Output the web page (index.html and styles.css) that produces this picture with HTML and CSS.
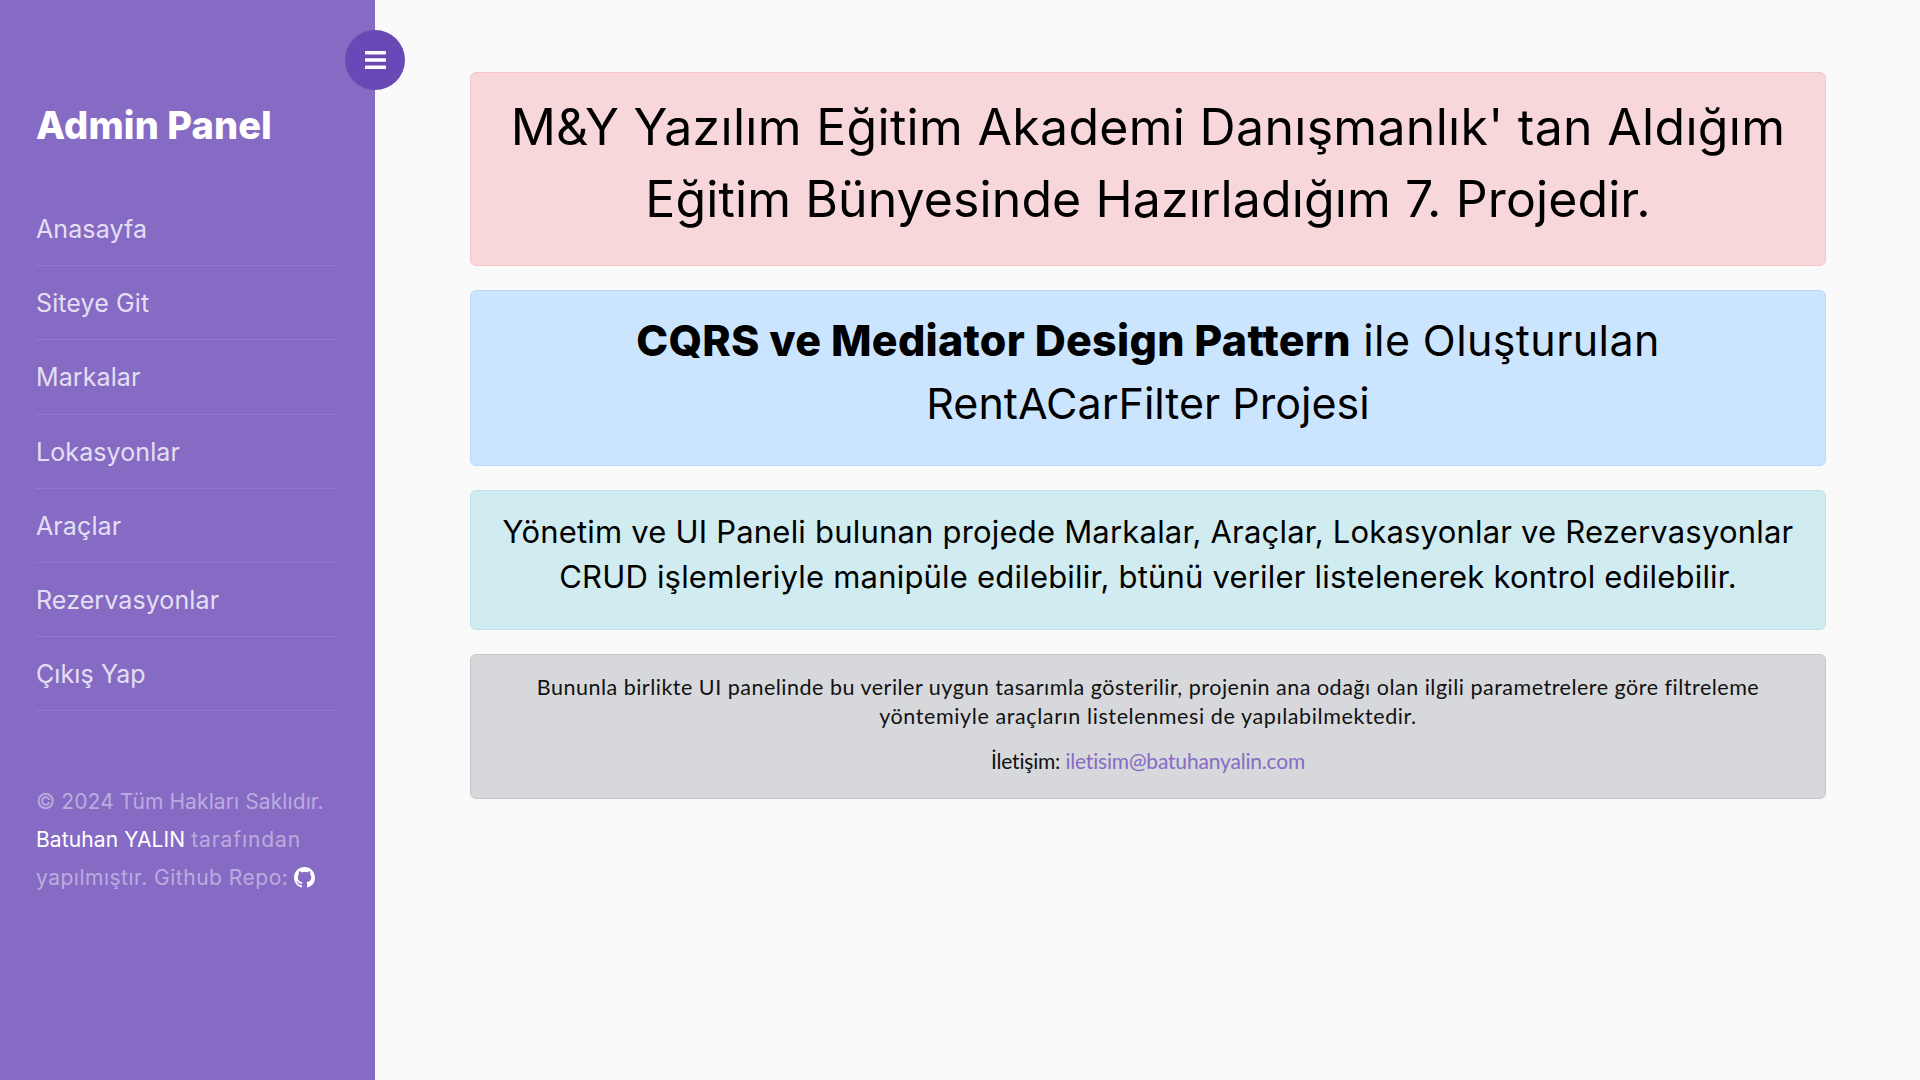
FILE: index.html
```html
<!DOCTYPE html>
<html lang="tr">
<head>
  <meta charset="UTF-8">
  <meta name="viewport" content="width=device-width, initial-scale=1.0">
  <title>Admin Panel</title>
  <link rel="stylesheet" href="styles.css">
</head>
<body>
  <div class="wrapper">
    <!-- Sidebar -->
    <nav class="sidebar">
      <button class="toggle-btn" type="button" aria-label="Menu">
        <svg viewBox="0 0 21 18" width="21" height="18" fill="#fff">
          <rect x="0" y="0" width="21" height="3.4" rx="0.6"/>
          <rect x="0" y="7.3" width="21" height="3.4" rx="0.6"/>
          <rect x="0" y="14.6" width="21" height="3.4" rx="0.6"/>
        </svg>
      </button>
      <h1 class="logo">Admin Panel</h1>
      <ul class="menu">
        <li><a href="#">Anasayfa</a></li>
        <li><a href="#">Siteye Git</a></li>
        <li><a href="#">Markalar</a></li>
        <li><a href="#">Lokasyonlar</a></li>
        <li><a href="#">Araçlar</a></li>
        <li><a href="#">Rezervasyonlar</a></li>
        <li><a href="#">Çıkış Yap</a></li>
      </ul>
      <p class="copyright">
        © 2024 Tüm Hakları Saklıdır.<br>
        <a href="#">Batuhan YALIN</a> <span class="by">tarafından</span><br>
        <span class="repo">yapılmıştır. Github Repo:</span>
        <a href="#" class="github"><svg viewBox="0 0 16 16" width="21" height="21" fill="#fff"><path d="M8 0C3.58 0 0 3.58 0 8c0 3.54 2.29 6.53 5.47 7.59.4.07.55-.17.55-.38 0-.19-.01-.82-.01-1.49-2.01.37-2.53-.49-2.69-.94-.09-.23-.48-.94-.82-1.13-.28-.15-.68-.52-.01-.53.63-.01 1.08.58 1.23.82.72 1.21 1.87.87 2.33.66.07-.52.28-.87.51-1.07-1.78-.2-3.64-.89-3.64-3.95 0-.87.31-1.59.82-2.15-.08-.2-.36-1.02.08-2.12 0 0 .67-.21 2.2.82.64-.18 1.32-.27 2-.27.68 0 1.36.09 2 .27 1.53-1.04 2.2-.82 2.2-.82.44 1.1.16 1.92.08 2.12.51.56.82 1.27.82 2.15 0 3.07-1.87 3.75-3.65 3.95.29.25.54.73.54 1.48 0 1.07-.01 1.93-.01 2.2 0 .21.15.46.55.38A8.013 8.013 0 0016 8c0-4.42-3.58-8-8-8z"/></svg></a>
      </p>
    </nav>

    <!-- Content -->
    <main class="content">
      <div class="alert alert-danger">
        <h2 class="title-lg">M&amp;Y Yazılım Eğitim Akademi Danışmanlık' tan Aldığım<br><span class="tight">Eğitim Bünyesinde Hazırladığım 7. Projedir.</span></h2>
      </div>
      <div class="alert alert-primary">
        <h3 class="title-md"><strong>CQRS ve Mediator Design Pattern</strong> ile Oluşturulan<br><span class="tight">RentACarFilter Projesi</span></h3>
      </div>
      <div class="alert alert-info">
        <h4 class="title-sm">Yönetim ve UI Paneli bulunan projede Markalar, Araçlar, Lokasyonlar ve Rezervasyonlar<br>CRUD işlemleriyle manipüle edilebilir, btünü veriler listelenerek kontrol edilebilir.</h4>
      </div>
      <div class="alert alert-secondary">
        <p class="note">Bununla birlikte UI panelinde bu veriler uygun tasarımla gösterilir, projenin ana odağı olan ilgili parametrelere göre filtreleme<br><span class="wide">yöntemiyle araçların listelenmesi de yapılabilmektedir.</span></p>
        <p class="contact">İletişim: <a href="#">iletisim@batuhanyalin.com</a></p>
      </div>
    </main>
  </div>
</body>
</html>
```

FILE: styles.css
```css
* {
  margin: 0;
  padding: 0;
  box-sizing: border-box;
}

body {
  font-family: "Inter", "Open Sans", sans-serif;
  background: #fafafa;
  color: #000;
}

a {
  text-decoration: none;
}

.wrapper {
  display: flex;
  min-height: 1080px;
}

/* Sidebar */
.sidebar {
  position: relative;
  flex: 0 0 375px;
  padding: 104px 37px 0 36px;
  background: #866bc5;
}

.toggle-btn {
  position: absolute;
  top: 30px;
  right: -30px;
  width: 60px;
  height: 60px;
  display: flex;
  align-items: center;
  justify-content: center;
  border: 0;
  border-radius: 50%;
  background: #6849b6;
}

.logo {
  font-size: 38px;
  line-height: 42px;
  font-weight: 800;
  letter-spacing: 0.1px;
  color: #fff;
  margin-bottom: 46px;
}

.menu {
  list-style: none;
}

.menu li {
  border-bottom: 1px solid rgba(255, 255, 255, 0.1);
}

.menu a {
  display: block;
  padding: 17px 0 15px;
  font-size: 25px;
  line-height: 41.2px;
  letter-spacing: 0.1px;
  color: rgba(255, 255, 255, 0.8);
}

.copyright {
  margin-top: 72px;
  font-size: 21px;
  line-height: 38px;
  letter-spacing: 0.1px;
  color: rgba(255, 255, 255, 0.45);
}

.copyright a {
  color: #fff;
}

.by {
  letter-spacing: 0.9px;
}

.repo {
  letter-spacing: 0.5px;
}

.github svg {
  vertical-align: -3px;
}

/* Content */
.content {
  flex: 1;
  padding: 72px 94px 0 95px;
}

.alert {
  padding: 18px 24px 30px;
  margin-bottom: 24px;
  border: 1px solid transparent;
  border-radius: 6px;
  text-align: center;
}

.alert-danger {
  background: #f8d7da;
  border-color: #f5c6cb;
}

.alert-primary {
  background: #cce5ff;
  border-color: #b8daff;
}

.alert-info {
  background: #d1ecf1;
  border-color: #bee5eb;
}

.alert-secondary {
  background: #d6d8db;
  border-color: #c6c8ca;
  padding: 18px 24px 23px;
}

.title-lg {
  font-size: 50px;
  line-height: 72px;
  font-weight: 400;
  letter-spacing: 0.3px;
}

.title-lg .tight {
  letter-spacing: 0.1px;
}

.title-md {
  font-size: 43px;
  line-height: 63px;
  font-weight: 400;
  letter-spacing: 0.4px;
}

.title-md strong {
  font-weight: 800;
  letter-spacing: 0.25px;
}

.title-md .tight {
  letter-spacing: 0;
}

.title-sm {
  font-size: 31px;
  line-height: 45px;
  font-weight: 400;
  letter-spacing: 0.2px;
}

.note,
.contact {
  font-family: "Lato", "Open Sans", sans-serif;
  line-height: 29px;
  color: #111;
}

.note {
  font-size: 21.5px;
  letter-spacing: 0.5px;
}

.note .wide {
  letter-spacing: 0.6px;
}

.contact {
  margin-top: 15px;
  font-size: 21px;
  letter-spacing: -0.18px;
}

.contact a {
  color: #866bc5;
}
```
